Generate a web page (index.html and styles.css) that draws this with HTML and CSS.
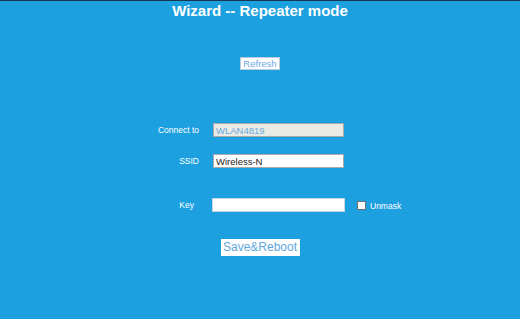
FILE: index.html
```html
<!DOCTYPE html>
<html>
<head>
<meta charset="utf-8">
<link rel="stylesheet" href="styles.css">
</head>
<body>
<div class="page">
  <h1 class="title">Wizard -- Repeater mode</h1>
  <div class="refresh-row"><button class="btn-refresh">Refresh</button></div>
  <div class="form">
    <div class="row"><label class="lbl">Connect to</label><input class="field field-disabled" value="WLAN4819" disabled></div>
    <div class="row"><label class="lbl">SSID</label><input class="field" value="Wireless-N"></div>
  </div>
  <div class="key-row">
    <label class="key-lbl">Key</label>
    <input class="key-field" type="password" value="">
    <input class="chk" type="checkbox">
    <span class="unmask">Unmask</span>
  </div>
  <div class="save-row"><button class="btn-save">Save&amp;Reboot</button></div>
</div>
</body>
</html>
```
FILE: styles.css
```css
html, body {
  margin: 0;
  padding: 0;
}
body {
  background: #1ca0e0;
  border-top: 1px solid #17384d;
  font-family: "Liberation Sans", Arial, sans-serif;
  color: #fff;
  width: 520px;
  height: 318px;
  overflow: hidden;
}
.page {
  display: flex;
  flex-direction: column;
}
.title {
  margin: 0;
  height: 20px;
  line-height: 20px;
  font-size: 15px;
  font-weight: bold;
  text-align: center;
  color: #fff;
}
.refresh-row {
  margin-top: 36px;
  display: flex;
  justify-content: center;
}
.btn-refresh {
  width: 40px;
  height: 13px;
  padding: 0;
  margin: 0;
  border: 1px solid #b9cde0;
  background: #fff;
  color: #6ea8e6;
  font-family: "Liberation Sans", Arial, sans-serif;
  font-size: 9.5px;
  line-height: 11px;
}
.form {
  margin-top: 53px;
  display: flex;
  flex-direction: column;
  gap: 17px;
}
.row {
  display: flex;
  align-items: center;
  height: 14px;
}
.lbl {
  width: 213px;
  box-sizing: border-box;
  padding-right: 14px;
  text-align: right;
  font-size: 8.5px;
  color: #fff;
}
.field {
  width: 131px;
  height: 14px;
  box-sizing: border-box;
  margin: 0;
  padding: 0 2px;
  border: 1px solid #a9a9a9;
  background: #fff;
  color: #222;
  font-family: "Liberation Sans", Arial, sans-serif;
  font-size: 9.5px;
}
.field-disabled {
  background: #ebebe6;
  color: #6aa8dc;
}
.key-row {
  margin-top: 30px;
  display: flex;
  align-items: center;
  height: 14px;
}
.key-lbl {
  width: 194px;
  text-align: right;
  font-size: 8.5px;
  color: #fff;
}
.key-field {
  margin: 0 0 0 18px;
  width: 133px;
  height: 14px;
  box-sizing: border-box;
  padding: 0 2px;
  border: 1px solid #c6d4e0;
  background: #fff;
}
.chk {
  appearance: none;
  -webkit-appearance: none;
  margin: 0 0 0 12px;
  width: 9px;
  height: 9px;
  box-sizing: border-box;
  border: 1px solid #707070;
  background: #fff;
}
.unmask {
  margin-left: 4px;
  font-size: 8.5px;
  color: #fff;
  position: relative;
  top: 1px;
}
.save-row {
  margin-top: 27px;
  display: flex;
  justify-content: center;
}
.btn-save {
  width: 79px;
  height: 17px;
  padding: 0;
  margin: 0;
  border: none;
  background: #fff;
  color: #5fa8e0;
  font-family: "Liberation Sans", Arial, sans-serif;
  font-size: 12px;
  line-height: 17px;
}
```
